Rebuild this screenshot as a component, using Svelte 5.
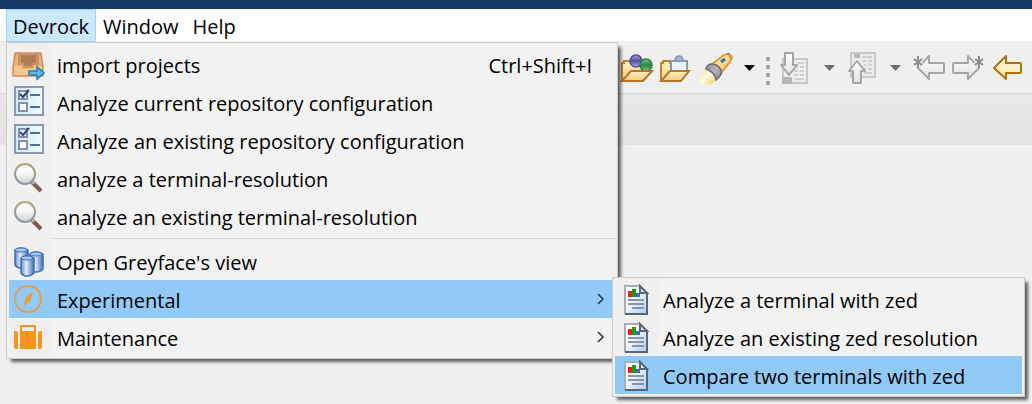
<script>
  const menus = ['Devrock', 'Window', 'Help'];

  const entries = [
    { icon: 'import', label: 'import projects', keys: 'Ctrl+Shift+I' },
    { icon: 'checklist', label: 'Analyze current repository configuration' },
    { icon: 'checklist', label: 'Analyze an existing repository configuration' },
    { icon: 'lens', label: 'analyze a terminal-resolution' },
    { icon: 'lens', label: 'analyze an existing terminal-resolution' },
    { separator: true },
    { icon: 'database', label: "Open Greyface's view" },
    { icon: 'compass', label: 'Experimental', submenu: true },
    { icon: 'case', label: 'Maintenance', submenu: true }
  ];

  const zedEntries = [
    'Analyze a terminal with zed',
    'Analyze an existing zed resolution',
    'Compare two terminals with zed'
  ];

  let open = $state('Experimental');
  let active = $state('Compare two terminals with zed');
</script>

{#snippet menuIcon(name)}
  <svg class="icon" viewBox="0 0 32 32" aria-hidden="true">
    {#if name === 'import'}
      <path d="M3 5H29L31 19V28H1V19Z" fill="url(#tray)" stroke="#c98f58" stroke-width="1.5" />
      <path d="M6 6H27V17H21V20H11V17H6Z" fill="#c99363" />
      <path d="M9 7H24V15H20V18H12V15H9Z" fill="#b07e54" />
      <path d="M2 18H9V21H22V18H30V27H2Z" fill="#f5c68e" />
      <path d="M17 23H25V19L32 25L25 31V27H17Z" fill="#5dbdf0" stroke="#2878bd" stroke-width="1.5" />
    {:else if name === 'checklist'}
      <rect x="3" y="1" width="28" height="28" fill="url(#sheet)" stroke="#8c98b5" stroke-width="2" />
      <rect x="7" y="5" width="8" height="8" fill="#e9f3fb" stroke="#858eac" stroke-width="2" />
      <rect x="7" y="17" width="8" height="8" fill="#fff" stroke="#858eac" stroke-width="2" />
      <path d="M8 8L11 11L17 4" fill="none" stroke="#29466c" stroke-width="2" />
      <path d="M18 9H28M18 21H28" stroke="#536f99" stroke-width="2" />
    {:else if name === 'lens'}
      <path d="M20 20L29 29" stroke="#7d5b50" stroke-width="4" />
      <path d="M20 19L22 22" stroke="#b9a9a4" stroke-width="3" />
      <circle cx="13" cy="12" r="10" fill="url(#glass)" stroke="url(#rim)" stroke-width="2" />
    {:else if name === 'database'}
      {#each [[3, 3], [18, 7], [9, 11]] as [x, y]}
        <path d="M{x} {y + 2}Q{x + 2} {y} {x + 6} {y}Q{x + 10} {y} {x + 13} {y + 2}V{y + 17}Q{x + 10} {y + 20} {x + 6} {y + 20}Q{x + 2} {y + 20} {x} {y + 17}Z" fill="url(#drum)" stroke="#3e6db2" stroke-width="1.5" />
        <ellipse cx={x + 6} cy={y + 2} rx="6" ry="2" fill="#a9c4e8" stroke="#3f73bd" />
      {/each}
    {:else if name === 'compass'}
      <circle cx="16" cy="16" r="13" fill="none" stroke="#e49b53" stroke-width="2" />
      <path d="M21 8L18 18L11 24L14 14Z" fill="#ed9a3e" />
    {:else if name === 'case'}
      <path d="M2 10H4Q6 10 6 12V28H4Q2 28 2 26ZM30 10H28Q26 10 26 12V28H28Q30 28 30 26ZM8 10H24V28H8Z" fill="#f7941e" />
      <path d="M9 11V5H23V11" fill="none" stroke="#f7941e" stroke-width="2" />
    {:else}
      <path d="M7 3H22L29 10V31H7Z" fill="url(#page)" />
      <path d="M7 31V3H22" fill="none" stroke="#a5adb8" stroke-width="2" />
      <path d="M29 9V31H7" fill="none" stroke="#596773" stroke-width="2" />
      <path d="M22 3L29 10H22Z" fill="#e2e6e8" stroke="#596773" stroke-width="2" />
      <rect x="10" y="8" width="4" height="6" fill="#ee1c24" />
      <rect x="18" y="10" width="4" height="4" fill="#3c67d6" />
      <rect x="14" y="6" width="4" height="8" fill="#1a9c12" />
      <path d="M10 17H26M10 21H26M14 25H26" stroke="#8d949c" stroke-width="2" />
    {/if}
  </svg>
{/snippet}

{#snippet dropdown(label, color)}
  <button class="tool" aria-label={label}>
    <svg width="20" height="32" viewBox="0 0 20 32"><path d="M6 13H17L11.500 19Z" fill={color} /></svg>
  </button>
{/snippet}

<svg class="defs" aria-hidden="true">
  <defs>
    <linearGradient id="tray" x2="0" y2="1"><stop stop-color="#e2ad78" /><stop offset="1" stop-color="#f1bd82" /></linearGradient>
    <linearGradient id="sheet"><stop stop-color="#cdeaf8" /><stop offset="1" stop-color="#effafd" /></linearGradient>
    <linearGradient id="glass" x2="0" y2="1"><stop stop-color="#fff" /><stop offset=".5" stop-color="#f4f5f5" /><stop offset="1" stop-color="#c9d1da" /></linearGradient>
    <linearGradient id="rim" x2="0" y2="1"><stop stop-color="#b0a670" /><stop offset="1" stop-color="#8d98a8" /></linearGradient>
    <linearGradient id="drum"><stop stop-color="#5d88c9" /><stop offset=".4" stop-color="#e3edfa" /><stop offset=".7" stop-color="#91b0dd" /><stop offset="1" stop-color="#416fb8" /></linearGradient>
    <linearGradient id="page" x2="1" y2="1"><stop offset=".3" stop-color="#fff" /><stop offset="1" stop-color="#a9cdf9" /></linearGradient>
    <linearGradient id="folder" x2="0" y2="1"><stop stop-color="#fff3c8" /><stop offset="1" stop-color="#f2cb78" /></linearGradient>
    <linearGradient id="violet" x2="0" y2="1"><stop stop-color="#aaa2d8" /><stop offset=".5" stop-color="#5b4fa2" /><stop offset="1" stop-color="#b1a9dc" /></linearGradient>
    <linearGradient id="green" x2="0" y2="1"><stop stop-color="#7fc48e" /><stop offset=".5" stop-color="#258542" /><stop offset="1" stop-color="#78c286" /></linearGradient>
    <linearGradient id="torch" x2="1" y2="1"><stop stop-color="#f0a437" /><stop offset=".45" stop-color="#ffe6a6" /><stop offset="1" stop-color="#ee9b2b" /></linearGradient>
    <linearGradient id="collar" x2="1" y2="1"><stop stop-color="#8c8587" /><stop offset=".5" stop-color="#bbb5bb" /><stop offset="1" stop-color="#7e777c" /></linearGradient>
    <linearGradient id="beam" x2="1" y2="1"><stop stop-color="#ffd24f" /><stop offset=".45" stop-color="#fffef0" /><stop offset="1" stop-color="#ffce3a" /></linearGradient>
    <linearGradient id="silver" x2="0" y2="1"><stop stop-color="#fff" /><stop offset="1" stop-color="#e0e0e0" /></linearGradient>
    <linearGradient id="gold" x2="0" y2="1"><stop stop-color="#fffbe8" /><stop offset="1" stop-color="#fde79f" /></linearGradient>
  </defs>
</svg>

<div class="window">
  <div class="titlebar"></div>
  <nav class="menubar" aria-label="Main menu">
    {#each menus as name, i}
      <div class="slot">
        <button class="top" class:opened={i === 0} aria-haspopup="menu">{name}</button>
        {#if i === 0}
          <div class="menu main" role="menu">
            {#each entries as entry}
              {#if entry.separator}
                <hr />
              {:else}
                <div class="holder">
                  <button class="row" class:lit={open === entry.label} role="menuitem" onclick={() => (open = entry.label)}>
                    {@render menuIcon(entry.icon)}
                    <span class="label">{entry.label}</span>
                    {#if entry.keys}<span class="keys">{entry.keys}</span>{/if}
                    {#if entry.submenu}
                      <svg class="chevron" width="8" height="12" viewBox="0 0 8 12" aria-hidden="true"><path d="M1 1L6 6L1 11" fill="none" stroke="#333" stroke-width="1.500" /></svg>
                    {/if}
                  </button>
                  {#if entry.label === 'Experimental' && open === 'Experimental'}
                    <div class="menu sub" role="menu">
                      {#each zedEntries as label}
                        <button class="row" class:lit={active === label} role="menuitem" onclick={() => (active = label)}>
                          {@render menuIcon('report')}
                          <span class="label">{label}</span>
                        </button>
                      {/each}
                    </div>
                  {/if}
                </div>
              {/if}
            {/each}
          </div>
        {/if}
      </div>
    {/each}
  </nav>

  <div class="toolbar" role="toolbar" aria-label="Tools">
    <button class="tool" aria-label="Open type">
      <svg width="32" height="32" viewBox="0 0 32 32">
        <path d="M4 29V11H6V9H13V11H28V19" fill="url(#folder)" stroke="#c08235" stroke-width="2" />
        <circle cx="18" cy="9" r="6" fill="url(#violet)" stroke="#544a98" stroke-width="1.500" />
        <circle cx="28" cy="13" r="6" fill="url(#green)" stroke="#267e42" stroke-width="1.500" />
        <path d="M4 29L13 19H34L25 29Z" fill="url(#folder)" stroke="#b87529" stroke-width="2" />
      </svg>
    </button>
    <button class="tool" aria-label="Open task">
      <svg width="32" height="32" viewBox="0 0 32 32">
        <path d="M3 29V11H5V9H12V11H28V19" fill="url(#folder)" stroke="#c08235" stroke-width="2" />
        <circle cx="21" cy="8" r="4" fill="#a5b6d0" stroke="#8193b5" stroke-width="1.500" />
        <path d="M13 19V9H29V19" fill="#eaf2fb" stroke="#8a98b6" stroke-width="2" />
        <path d="M3 29L12 19H31L23 29Z" fill="url(#folder)" stroke="#b87529" stroke-width="2" />
      </svg>
    </button>
    <button class="tool" aria-label="Search">
      <svg width="32" height="32" viewBox="0 0 32 32">
        <path d="M28 2L31 1L34 4V7L31 9Z" fill="#e0c48f" stroke="#a9813e" />
        <path d="M14 12L26 3Q30 1 31 4Q34 6 32 10L24 20Z" fill="url(#torch)" stroke="#d98c25" stroke-width="1.500" />
        <path d="M23 10L27 7" stroke="#3468b5" stroke-width="3" />
        <path d="M2 25L8 17L17 28L14 32H2Z" fill="url(#beam)" />
        <path d="M8 17Q9 12 14 12Q20 12 23 18Q25 23 18 28Q17 20 8 17Z" fill="url(#collar)" stroke="#716a70" stroke-width="1.500" />
      </svg>
    </button>
    {@render dropdown('Search options', '#000')}
    <svg width="6" height="32" viewBox="0 0 6 32" aria-hidden="true">
      {#each [5, 13, 21, 29] as y}<rect y={y} width="4" height="4" fill="#aaa496" />{/each}
    </svg>
    <button class="tool" aria-label="Next annotation">
      <svg width="30" height="32" viewBox="0 0 30 32">
        <rect x="3" y="7" width="24" height="24" fill="#ececec" stroke="#c8c8c8" stroke-width="2" />
        <path d="M2 25H12V32H2Z" fill="#b6b6b6" />
        <path d="M18 11H24M14 15H18M20 15H24M14 19H18M20 19H24M14 23H18M20 23H24M14 27H24" stroke="#d0d0d0" stroke-width="2" />
        <path d="M5 1H13V13H17L9 23L1 13H5Z" fill="url(#silver)" stroke="#a6a6a6" stroke-width="2" stroke-linejoin="round" />
      </svg>
    </button>
    {@render dropdown('Next annotation options', '#6d6d73')}
    <button class="tool" aria-label="Previous annotation">
      <svg width="30" height="32" viewBox="0 0 30 32">
        <rect x="5" y="1" width="24" height="24" fill="#ececec" stroke="#c8c8c8" stroke-width="2" />
        <path d="M8 2H14V6H8Z" fill="#b6b6b6" />
        <path d="M16 5H26M16 9H20M22 9H26M18 13H20M22 13H26M18 17H20M22 17H26M18 21H26" stroke="#d0d0d0" stroke-width="2" />
        <path d="M11 9L19 19H15V31H7V19H3Z" fill="url(#silver)" stroke="#a6a6a6" stroke-width="2" stroke-linejoin="round" />
      </svg>
    </button>
    {@render dropdown('Previous annotation options', '#6d6d73')}
    <button class="tool" aria-label="Previous edit location">
      <svg width="32" height="32" viewBox="0 0 32 32">
        <path d="M6 16L17 4V11H31Q32 11 32 12V20Q32 21 31 21H17V27Z" fill="url(#silver)" stroke="#a6a6a6" stroke-width="2" stroke-linejoin="round" />
        <path d="M6 4V16M2 7L10 13M10 7L2 13" stroke="#efefef" stroke-width="4" />
        <path d="M6 4V16M2 7L10 13M10 7L2 13" stroke="#8c8c8c" stroke-width="2" />
      </svg>
    </button>
    <button class="tool" aria-label="Next edit location">
      <svg width="32" height="32" viewBox="0 0 32 32">
        <path d="M27 16L16 4V11H2Q1 11 1 12V20Q1 21 2 21H16V27Z" fill="url(#silver)" stroke="#a6a6a6" stroke-width="2" stroke-linejoin="round" />
        <path d="M27 4V16M23 7L31 13M31 7L23 13" stroke="#efefef" stroke-width="4" />
        <path d="M27 4V16M23 7L31 13M31 7L23 13" stroke="#8c8c8c" stroke-width="2" />
      </svg>
    </button>
    <button class="tool" aria-label="Back">
      <svg width="32" height="32" viewBox="0 0 32 32">
        <path d="M2 16L14 4V11H28Q29 11 29 12V20Q29 21 28 21H14V27Z" fill="url(#gold)" stroke="#b3700c" stroke-width="2" stroke-linejoin="round" />
      </svg>
    </button>
  </div>
  <div class="band"></div>
</div>

<style>
  :global(body) {
    background: #f0f0f0;
  }
  .defs {
    position: absolute;
    width: 0;
    height: 0;
  }
  .window {
    min-height: 100vh;
    font: 20px/28px 'Open Sans', 'Noto Sans', sans-serif;
    color: #000;
  }
  button {
    font: inherit;
    color: inherit;
    border: 0;
    background: none;
    padding: 0;
    margin: 0;
  }
  svg {
    display: block;
    flex: none;
    overflow: visible;
  }
  .titlebar {
    height: 9px;
    background: #163a66;
  }
  .menubar {
    display: flex;
    height: 32px;
    padding-left: 6px;
    background: #fff;
  }
  .slot {
    position: relative;
  }
  .top {
    height: 33px;
    padding: 2px 6px 0;
    border: 1px solid transparent;
    white-space: nowrap;
  }
  .top.opened {
    background: #cce8ff;
    border-color: #99d1ff;
  }
  .menu {
    position: absolute;
    z-index: 1;
    box-sizing: border-box;
    padding: 2px;
    border: 1px solid #ccc;
    background: linear-gradient(90deg, #f0f0f0 44px, #f2f2f2 44px);
    background-origin: content-box;
    box-shadow: 4px 4px 3px -1px rgba(0, 0, 0, 0.6);
  }
  .main {
    top: 33px;
    left: 0;
    width: 612px;
  }
  .sub {
    top: -3px;
    left: calc(100% - 3px);
    width: 413px;
  }
  .holder {
    position: relative;
  }
  .row {
    display: flex;
    align-items: center;
    width: 100%;
    height: 38px;
    padding-left: 3px;
    text-align: left;
    white-space: nowrap;
  }
  .row.lit {
    background: #91c9f7;
  }
  .icon {
    width: 32px;
    height: 32px;
    margin-right: 13px;
  }
  .label {
    flex: 1;
    padding-top: 4px;
  }
  .keys {
    padding: 4px 23px 0 0;
  }
  .chevron {
    margin-right: 10px;
  }
  hr {
    height: 1px;
    margin: 3px 0 3px 44px;
    border: 0;
    background: #d4d4d4;
  }
  .toolbar {
    display: flex;
    justify-content: flex-end;
    gap: 8px;
    padding: 11px 8px 9px;
    border-bottom: 1px solid #d6d6d6;
    background: #efefef;
  }
  .band {
    height: 51px;
    background: linear-gradient(#e8e8e8, #e2e2e2);
  }
</style>
